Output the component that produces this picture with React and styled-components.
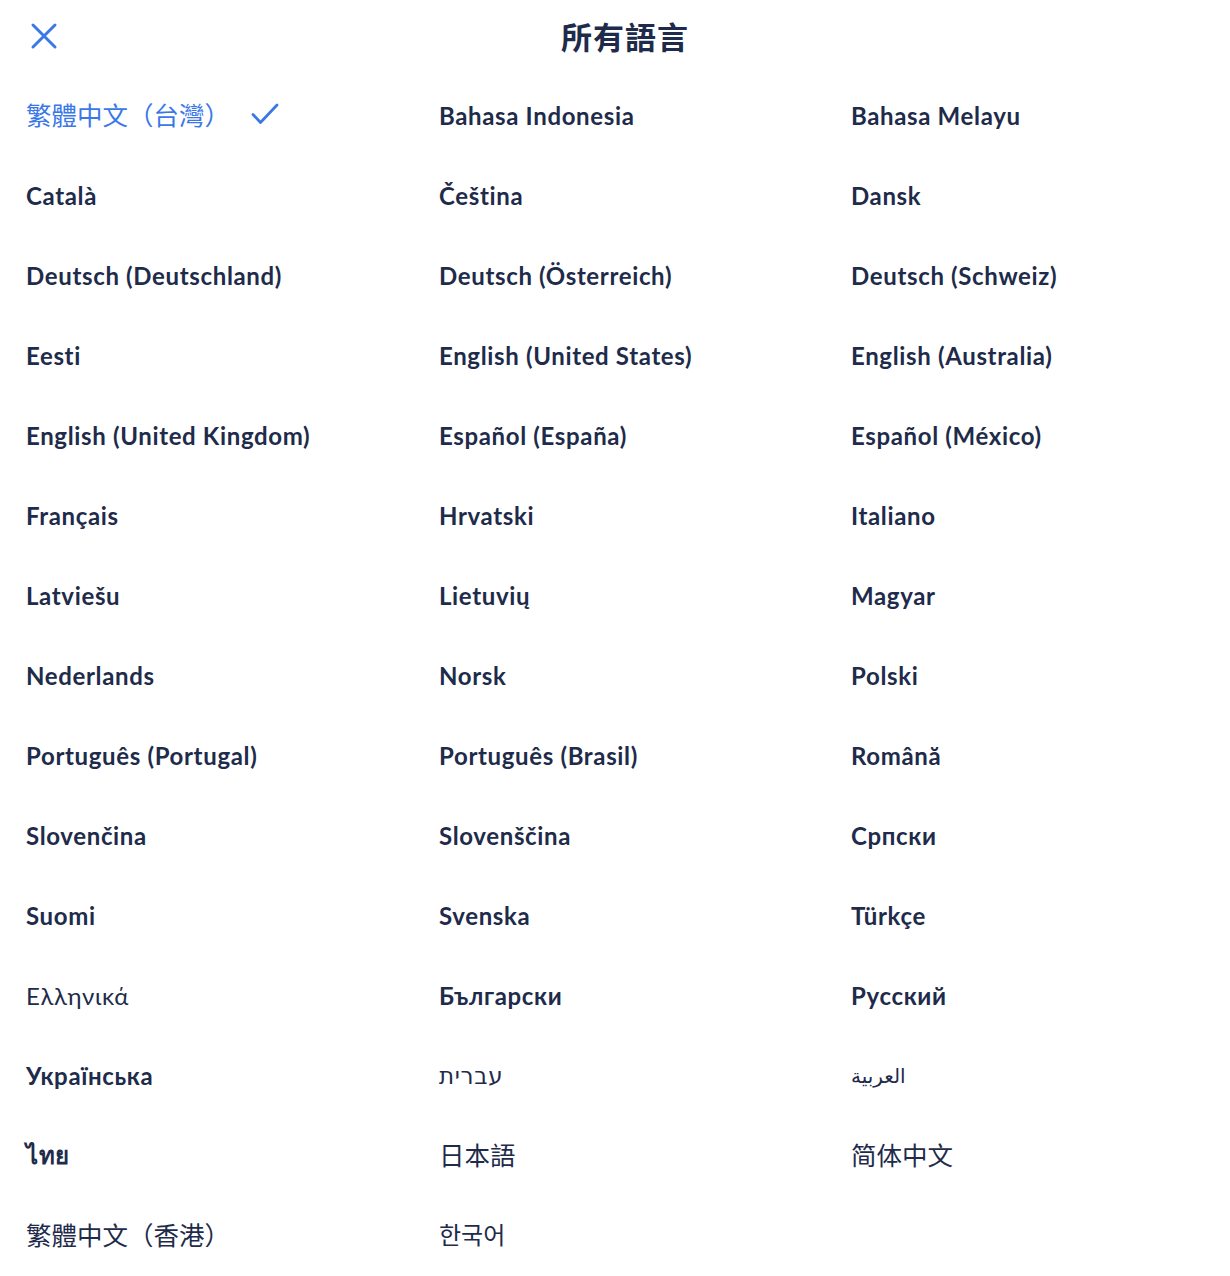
import React from "react";
import styled, { createGlobalStyle } from "styled-components";

const GlobalStyle = createGlobalStyle`
  html, body {
    margin: 0;
    padding: 0;
    background: #ffffff;
  }
  body {
    font-family: Lato, "Noto Sans", "Noto Sans CJK TC", sans-serif;
    color: #1e2b4a;
  }
`;

const Page = styled.div`
  width: 1230px;
  min-height: 1276px;
  background: #ffffff;
  box-sizing: border-box;
`;

const Header = styled.header`
  position: relative;
  height: 75px;
  display: flex;
  align-items: center;
  justify-content: center;
  padding-left: 20px;
`;

const CloseButton = styled.button`
  position: absolute;
  left: 26px;
  top: 18px;
  width: 36px;
  height: 36px;
  padding: 0;
  border: none;
  background: transparent;
  display: flex;
  align-items: center;
  justify-content: center;
  cursor: pointer;
`;

const Title = styled.h1`
  margin: 0;
  margin-top: -5px;
  font-family: "Noto Sans CJK TC", sans-serif;
  font-size: 31px;
  font-weight: 700;
  color: #1e2b4a;
  letter-spacing: 1px;
`;

const Grid = styled.ul`
  list-style: none;
  margin: 0;
  padding: 0 0 0 26px;
  display: grid;
  grid-template-columns: 413px 412px 1fr;
  grid-auto-rows: 80px;
`;

const Item = styled.li`
  display: flex;
  align-items: center;
  gap: 20px;
  padding-bottom: ${(p) => (p.$cjk ? "3px" : "0")};
  font-size: ${(p) => p.$size || (p.$cjk ? "25.5px" : "24px")};
  font-weight: ${(p) => (p.$regular ? 400 : 700)};
  letter-spacing: ${(p) => (p.$cjk ? "0" : "0.65px")};
  font-family: ${(p) =>
    p.$cjk
      ? `"Noto Sans CJK TC", sans-serif`
      : `Lato, "Noto Sans", "DejaVu Sans", sans-serif`};
  color: ${(p) => (p.$active ? "#3b78e7" : "#1e2b4a")};
  cursor: pointer;
  white-space: nowrap;
`;

const CloseIcon = () => (
  <svg width="28" height="28" viewBox="0 0 28 28" fill="none">
    <path
      d="M3 3 L25 25 M25 3 L3 25"
      stroke="#3b78e7"
      strokeWidth="3"
      strokeLinecap="round"
    />
  </svg>
);

const CheckIcon = () => (
  <svg width="30" height="26" viewBox="0 0 30 26" fill="none">
    <path
      d="M3 13.5 L10.5 21.5 L27 4"
      stroke="#3b78e7"
      strokeWidth="2.8"
      strokeLinecap="round"
      strokeLinejoin="round"
    />
  </svg>
);

const languages = [
  { label: "繁體中文（台灣）", cjk: true, regular: true, active: true },
  { label: "Bahasa Indonesia" },
  { label: "Bahasa Melayu" },
  { label: "Català" },
  { label: "Čeština" },
  { label: "Dansk" },
  { label: "Deutsch (Deutschland)" },
  { label: "Deutsch (Österreich)" },
  { label: "Deutsch (Schweiz)" },
  { label: "Eesti" },
  { label: "English (United States)" },
  { label: "English (Australia)" },
  { label: "English (United Kingdom)" },
  { label: "Español (España)" },
  { label: "Español (México)" },
  { label: "Français" },
  { label: "Hrvatski" },
  { label: "Italiano" },
  { label: "Latviešu" },
  { label: "Lietuvių" },
  { label: "Magyar" },
  { label: "Nederlands" },
  { label: "Norsk" },
  { label: "Polski" },
  { label: "Português (Portugal)" },
  { label: "Português (Brasil)" },
  { label: "Română" },
  { label: "Slovenčina" },
  { label: "Slovenščina" },
  { label: "Српски" },
  { label: "Suomi" },
  { label: "Svenska" },
  { label: "Türkçe" },
  { label: "Ελληνικά", regular: true },
  { label: "Български" },
  { label: "Русский" },
  { label: "Українська" },
  { label: "עברית", regular: true, size: "23px" },
  { label: "العربية", regular: true, size: "20px" },
  { label: "ไทย" },
  { label: "日本語", cjk: true, regular: true },
  { label: "简体中文", cjk: true, regular: true },
  { label: "繁體中文（香港）", cjk: true, regular: true },
  { label: "한국어", cjk: true, regular: true, size: "24px" },
];

export default function App() {
  return (
    <Page>
      <GlobalStyle />
      <Header>
        <CloseButton aria-label="關閉">
          <CloseIcon />
        </CloseButton>
        <Title>所有語言</Title>
      </Header>
      <Grid>
        {languages.map((lang) => (
          <Item
            key={lang.label}
            $cjk={lang.cjk}
            $regular={lang.regular}
            $active={lang.active}
            $size={lang.size}
          >
            <span>{lang.label}</span>
            {lang.active && <CheckIcon />}
          </Item>
        ))}
      </Grid>
    </Page>
  );
}
